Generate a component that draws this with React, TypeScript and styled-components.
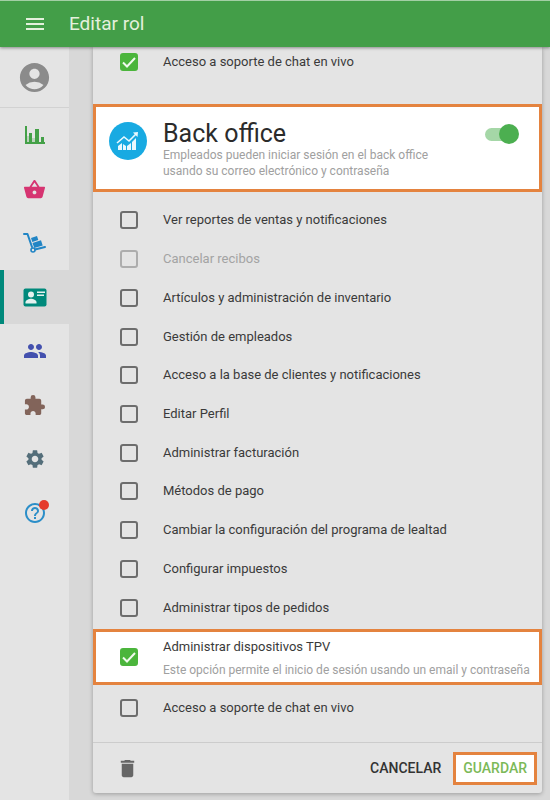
import React, { useState } from 'react';
import styled, { createGlobalStyle, css } from 'styled-components';
import {
  MdAccountCircle,
  MdDelete,
  MdExtension,
  MdHelpOutline,
  MdMenu,
  MdPeople,
  MdSettings,
  MdShoppingBasket,
} from 'react-icons/md';

const GlobalStyle = createGlobalStyle`
  *, *::before, *::after { box-sizing: border-box; }
  body {
    margin: 0;
    background: #d8d8d8;
    color: #3a3a3a;
    font-family: Roboto, "Liberation Sans", sans-serif;
    font-size: 14px;
    line-height: 20px;
  }
  button { font: inherit; border: 0; padding: 0; background: none; cursor: pointer; }
`;

const Page = styled.div`
  min-height: 100vh;
  display: flex;
  flex-direction: column;
`;

const Header = styled.header`
  position: relative;
  z-index: 1;
  display: flex;
  align-items: center;
  height: 47px;
  border-top: 1px solid #a3cfa5;
  background: #439e48;
  color: #e4f0dc;
  box-shadow: 0 1px 3px rgba(0, 0, 0, 0.4);
`;

const MenuButton = styled.button`
  display: flex;
  justify-content: center;
  width: 69px;
  color: inherit;
`;

const Title = styled.h1`
  margin: 0;
  font-size: 19px;
  line-height: 24px;
  font-weight: 400;
`;

const Body = styled.div`
  flex: 1;
  display: flex;
`;

const Sidebar = styled.nav`
  flex: 0 0 69px;
  background: #e4e4e4;
`;

const Account = styled.a`
  display: flex;
  align-items: center;
  justify-content: center;
  height: 61px;
  border-bottom: 1px solid #d2d2d2;
  color: #8b8b8b;
`;

const NavLink = styled.a<{ $color: string; $active?: boolean }>`
  display: flex;
  align-items: center;
  justify-content: center;
  height: 54px;
  color: ${(p) => p.$color};
  ${(p) =>
    p.$active &&
    css`
      background: #d8d8d8;
      box-shadow: inset 4px 0 0 #00897b;
    `}
`;

const IconSlot = styled.span`
  position: relative;
  display: flex;
`;

const Badge = styled.span`
  position: absolute;
  top: -1px;
  right: -2px;
  width: 10px;
  height: 10px;
  border-radius: 50%;
  background: #e53a2c;
`;

const Main = styled.main`
  flex: 1;
  min-width: 0;
  padding: 0 8px 7px 24px;
`;

const Card = styled.form`
  background: #e4e4e4;
  border-radius: 0 0 3px 3px;
  box-shadow: 0 1px 4px rgba(0, 0, 0, 0.28);
`;

const highlight = css`
  border: 3px solid #e4833f;
  background: #fff;
`;

const Option = styled.label<{ $disabled?: boolean; $highlighted?: boolean }>`
  display: flex;
  align-items: center;
  gap: 25px;
  padding: 0 24px 0 27px;
  font-size: 13px;
  color: ${(p) => (p.$disabled ? '#a3a3a3' : '#3a3a3a')};
  ${(p) =>
    p.$highlighted &&
    css`
      ${highlight}
      height: 56px;
      padding-left: 24px;
      padding-right: 4px;
    `}
`;

const PosGroup = styled.div`
  padding: 5px 0 32px;
`;

const ChatGroup = styled.div`
  padding: 13px 0 24px;
`;

const OptionList = styled.div`
  display: grid;
  grid-auto-rows: 1fr;
  min-height: 437px;
  padding: 9px 0 2px;
`;

const Tick = styled.span`
  display: grid;
  flex: none;
  place-items: center;
  > * { grid-area: 1 / 1; }
`;

const TickInput = styled.input`
  appearance: none;
  width: 18px;
  height: 18px;
  margin: 0;
  border: 2px solid #6d6d6d;
  border-radius: 3px;
  &:checked { border-color: #4bb53c; background: #4bb53c; }
  &:disabled { border-color: #adadad; }
`;

const TickMark = styled.svg`
  width: 18px;
  height: 18px;
  pointer-events: none;
  fill: none;
  stroke: #f1faee;
  stroke-width: 2;
  visibility: hidden;
  input:checked + & { visibility: visible; }
`;

const OptionText = styled.span`
  display: flex;
  flex-direction: column;
  gap: 5px;
`;

const Hint = styled.span`
  font-size: 12px;
  line-height: 16px;
  color: #a0a0a0;
`;

const Section = styled.section`
  ${highlight}
  display: flex;
  align-items: flex-start;
  height: 88px;
  padding: 14px 20px 0 13px;
`;

const SectionText = styled.div`
  flex: 1;
  padding-left: 16px;
`;

const SectionTitle = styled.h2`
  margin: 0;
  font-size: 25px;
  line-height: 26px;
  font-weight: 400;
  color: #2b2b2b;
`;

const SectionHint = styled.p`
  margin: 0;
  max-width: 270px;
  font-size: 12px;
  line-height: 16px;
  color: #a0a0a0;
`;

const SectionIcon = styled.svg`
  flex: none;
  width: 38px;
  height: 38px;
  margin-top: 1px;
`;

const Switch = styled.input`
  appearance: none;
  display: flex;
  align-items: center;
  width: 34px;
  height: 20px;
  margin: 3px 0 0;
  cursor: pointer;
  background: linear-gradient(#c4c4c4, #c4c4c4) center / 34px 13px no-repeat;
  border-radius: 10px;
  &::before {
    content: '';
    width: 20px;
    height: 20px;
    border-radius: 50%;
    background: #f4f4f4;
    box-shadow: 0 1px 2px rgba(0, 0, 0, 0.3);
  }
  &:checked {
    justify-content: flex-end;
    background: none;
    position: relative;
  }
  &:checked::before { background: #4caf50; box-shadow: none; z-index: 1; }
  &:checked::after {
    content: '';
    position: absolute;
    left: 0;
    right: 4px;
    top: 4px;
    height: 13px;
    border-radius: 7px;
    background: #a5d7a7;
  }
`;

const Footer = styled.footer`
  display: flex;
  align-items: center;
  height: 51px;
  padding: 0 5px 0 23px;
  border-top: 1px solid #cccccc;
`;

const DeleteButton = styled.button`
  display: flex;
  margin-right: auto;
  color: #666;
`;

const Action = styled.button<{ $primary?: boolean }>`
  height: 33px;
  padding: 0 12px;
  font-weight: 500;
  color: #333;
  ${(p) =>
    p.$primary &&
    css`
      ${highlight}
      padding: 0 7px;
      color: #7cb958;
    `}
`;

const ChartIcon = () => (
  <svg width="22" height="20" viewBox="0 0 22 20" fill="currentColor" aria-hidden="true">
    <path d="M1 1h2v16h18v2H1z" />
    <path d="M5 8h3v9H5zM11 4h4v13h-4zM17 12h3v5h-3z" />
    <path d="M3 11h2v6H3zM8 13h3v4H8z" opacity=".25" />
  </svg>
);

const DollyIcon = () => (
  <svg width="24" height="22" viewBox="0 0 24 22" aria-hidden="true">
    <path
      d="M1 2h3.5l4.5 13M12 17.500l10-2.500"
      fill="none"
      stroke="currentColor"
      strokeWidth="2"
      strokeLinecap="round"
      strokeLinejoin="round"
    />
    <circle cx="10" cy="18" r="2" fill="none" stroke="currentColor" strokeWidth="1.600" />
    <path fill="currentColor" d="M8 6l6-2 1.300 4-6 2zM9.500 11l8.500-2.700 1.700 5.200-8.400 2.500z" />
  </svg>
);

const IdCardIcon = () => (
  <svg width="24" height="19" viewBox="0 0 24 19" aria-hidden="true">
    <rect x="0.500" y="0.500" width="23" height="18" rx="2" fill="currentColor" />
    <g fill="#e4f1ef">
      <circle cx="8" cy="6.500" r="3" />
      <path d="M2.500 15.500v-1.200c0-2.300 3.500-3.600 5.500-3.600s5.500 1.300 5.500 3.600v1.200z" />
      <path d="M14 3.500h8v1.500h-8zM14 6.500h7v1.500h-7z" />
    </g>
  </svg>
);

const navItems = [
  { name: 'Reportes', color: '#43a047', icon: <ChartIcon /> },
  { name: 'Artículos', color: '#d63471', icon: <MdShoppingBasket size={23} /> },
  { name: 'Inventario', color: '#2185c5', icon: <DollyIcon /> },
  { name: 'Empleados', color: '#00897b', icon: <IdCardIcon />, active: true },
  { name: 'Clientes', color: '#4350ae', icon: <MdPeople size={24} /> },
  { name: 'Integraciones', color: '#82645a', icon: <MdExtension size={23} /> },
  { name: 'Configuración', color: '#546e7a', icon: <MdSettings size={22} /> },
  { name: 'Ayuda', color: '#2b8ec8', icon: <MdHelpOutline size={24} />, badge: true },
];

const permissions = [
  { text: 'Ver reportes de ventas y notificaciones' },
  { text: 'Cancelar recibos', disabled: true },
  { text: 'Artículos y administración de inventario' },
  { text: 'Gestión de empleados' },
  { text: 'Acceso a la base de clientes y notificaciones' },
  { text: 'Editar Perfil' },
  { text: 'Administrar facturación' },
  { text: 'Métodos de pago' },
  { text: 'Cambiar la configuración del programa de lealtad' },
  { text: 'Configurar impuestos' },
  { text: 'Administrar tipos de pedidos' },
];

interface PermissionProps {
  text: string;
  hint?: string;
  checked?: boolean;
  disabled?: boolean;
  highlighted?: boolean;
}

function Permission({ text, hint, checked = false, disabled, highlighted }: PermissionProps) {
  const [on, setOn] = useState(checked);
  return (
    <Option $disabled={disabled} $highlighted={highlighted}>
      <Tick>
        <TickInput
          type="checkbox"
          checked={on}
          disabled={disabled}
          onChange={(e) => setOn(e.target.checked)}
        />
        <TickMark viewBox="0 0 18 18" aria-hidden="true">
          <path d="M3 9.500l4 4 8-8.500" />
        </TickMark>
      </Tick>
      <OptionText>
        {text}
        {hint && <Hint>{hint}</Hint>}
      </OptionText>
    </Option>
  );
}

export default function App() {
  return (
    <>
      <GlobalStyle />
      <Page>
        <Header>
          <MenuButton type="button" aria-label="Menú">
            <MdMenu size={24} />
          </MenuButton>
          <Title>Editar rol</Title>
        </Header>
        <Body>
          <Sidebar>
            <Account href="#cuenta" aria-label="Cuenta">
              <MdAccountCircle size={35} />
            </Account>
            {navItems.map((item) => (
              <NavLink
                key={item.name}
                href={`#${item.name.toLowerCase()}`}
                aria-label={item.name}
                $color={item.color}
                $active={item.active}
              >
                <IconSlot>
                  {item.icon}
                  {item.badge && <Badge />}
                </IconSlot>
              </NavLink>
            ))}
          </Sidebar>
          <Main>
            <Card onSubmit={(e) => e.preventDefault()}>
              <PosGroup>
                <Permission text="Acceso a soporte de chat en vivo" checked />
              </PosGroup>
              <Section>
                <SectionIcon viewBox="0 0 38 38" aria-hidden="true">
                  <circle cx="19" cy="19" r="19" fill="#18aae2" />
                  <path
                    fill="#e9f8fe"
                    d="M9 24l4-3v7H9zM14 22l3 2v4h-3zM18 24l4-3v7h-4zM23 20l4-4v12h-4z"
                  />
                  <path d="M8 21l7-6 5 4 7-7" fill="none" stroke="#e9f8fe" strokeWidth="1.600" />
                  <path d="M24 10.500l5-.5-.5 5z" fill="#e9f8fe" />
                </SectionIcon>
                <SectionText>
                  <SectionTitle id="back-office">Back office</SectionTitle>
                  <SectionHint>
                    Empleados pueden iniciar sesión en el back office usando su correo electrónico y
                    contraseña
                  </SectionHint>
                </SectionText>
                <Switch type="checkbox" role="switch" defaultChecked aria-labelledby="back-office" />
              </Section>
              <OptionList>
                {permissions.map((p) => (
                  <Permission key={p.text} {...p} />
                ))}
              </OptionList>
              <Permission
                text="Administrar dispositivos TPV"
                hint="Este opción permite el inicio de sesión usando un email y contraseña"
                checked
                highlighted
              />
              <ChatGroup>
                <Permission text="Acceso a soporte de chat en vivo" />
              </ChatGroup>
              <Footer>
                <DeleteButton type="button" aria-label="Eliminar">
                  <MdDelete size={23} />
                </DeleteButton>
                <Action type="button">CANCELAR</Action>
                <Action type="submit" $primary>
                  GUARDAR
                </Action>
              </Footer>
            </Card>
          </Main>
        </Body>
      </Page>
    </>
  );
}
